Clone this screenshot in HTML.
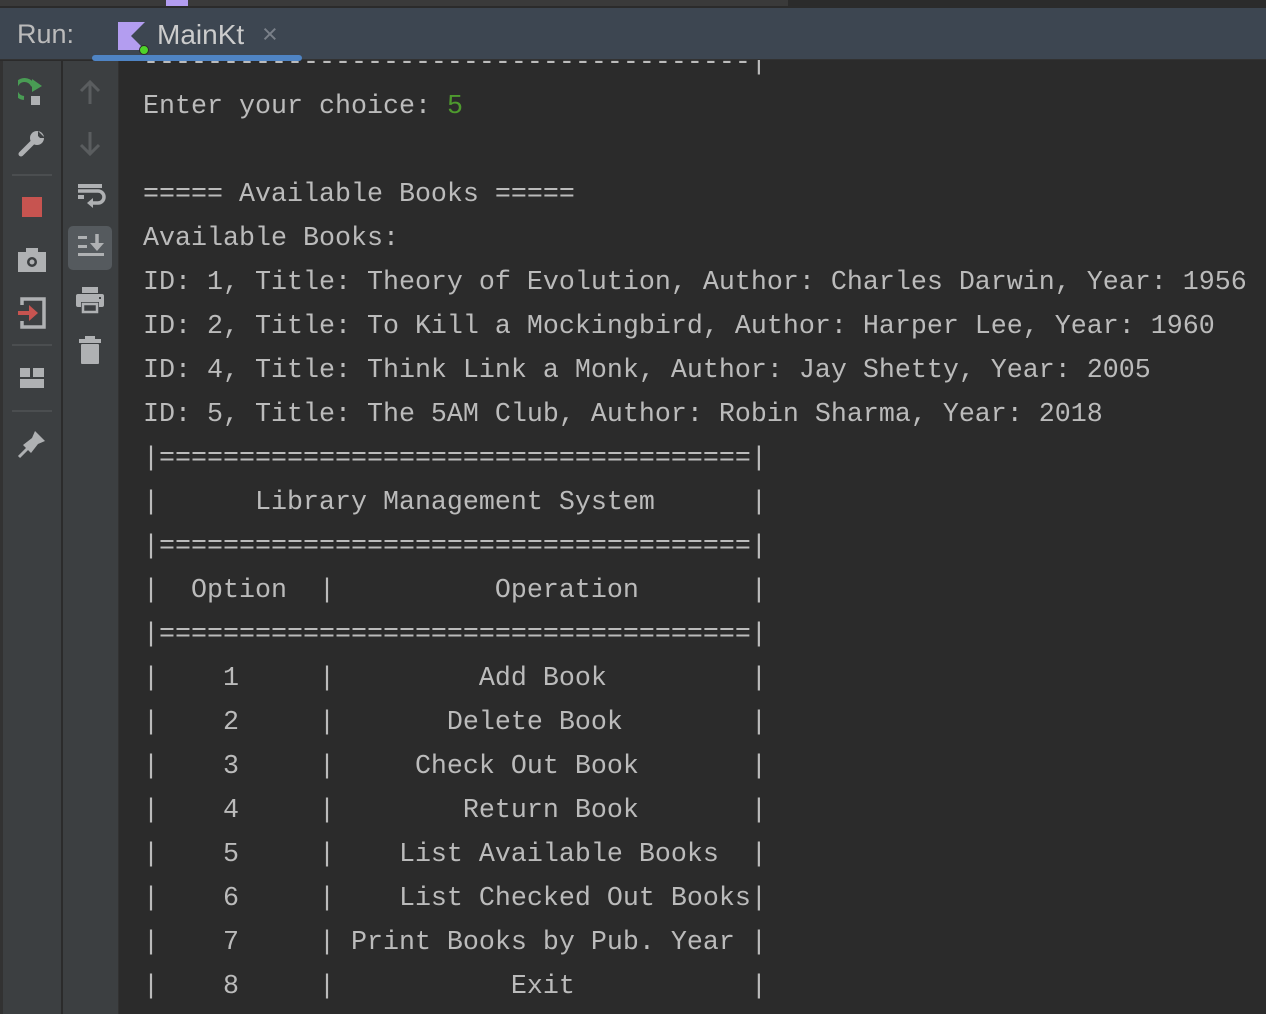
<!DOCTYPE html>
<html><head><meta charset="utf-8"><style>
*{margin:0;padding:0;box-sizing:border-box}
body{width:1266px;height:1014px;overflow:hidden;background:#2b2b2b;position:relative;font-family:"Liberation Sans",sans-serif}
#top{position:absolute;left:0;top:0;width:1266px;height:8px;background:#2b2b2b}
#hdr{position:absolute;left:0;top:8px;width:1266px;height:52px;background:#3d4651;border-bottom:1px solid #323232}
#tb1{position:absolute;left:0;top:61px;width:61px;height:953px;background:#3c3f41;border-left:3px solid #323232}
#tb2{position:absolute;left:62px;top:61px;width:57px;height:953px;background:#3c3f41;border-left:1px solid #2b2b2b;border-right:1px solid #323232}
#con{position:absolute;left:143px;top:41px;font-family:"Liberation Mono",monospace;font-size:26.67px;line-height:44px;color:#bbbbbb;white-space:pre}
.g{color:#4e9a2e}
svg{position:absolute}
.sep{position:absolute;left:12px;width:40px;height:2px;background:#4b4e50}
</style></head><body>
<div id="con">--------------------------------------|
Enter your choice: <span class="g">5</span>

===== Available Books =====
Available Books:
ID: 1, Title: Theory of Evolution, Author: Charles Darwin, Year: 1956
ID: 2, Title: To Kill a Mockingbird, Author: Harper Lee, Year: 1960
ID: 4, Title: Think Link a Monk, Author: Jay Shetty, Year: 2005
ID: 5, Title: The 5AM Club, Author: Robin Sharma, Year: 2018
|=====================================|
|      Library Management System      |
|=====================================|
|  Option  |          Operation       |
|=====================================|
|    1     |         Add Book         |
|    2     |       Delete Book        |
|    3     |     Check Out Book       |
|    4     |        Return Book       |
|    5     |    List Available Books  |
|    6     |    List Checked Out Books|
|    7     | Print Books by Pub. Year |
|    8     |           Exit           |</div>
<div id="top"><div style="position:absolute;left:0;top:0;width:788px;height:6px;background:#3a3a3a"></div><div style="position:absolute;left:166px;top:0;width:22px;height:6px;background:#b39df0"></div></div>
<div id="hdr">
<div style="position:absolute;left:17px;top:11px;font-size:27px;color:#bbbbbb">Run:</div>
<svg style="left:118px;top:14px" width="32" height="34" viewBox="0 0 32 34"><polygon points="0,0 27,0 13,14 27,28 0,28" fill="#b39df0"/><circle cx="26" cy="28" r="4.5" fill="#4ed32a" stroke="#2b2b2b" stroke-width="1"/></svg>
<div style="position:absolute;left:157px;top:11px;font-size:28px;color:#cccccc">MainKt</div>
<div style="position:absolute;left:262px;top:11px;font-size:27px;color:#7a8089">×</div>
<div style="position:absolute;left:92px;top:47px;width:210px;height:6px;border-radius:3px;background:#4f84c4"></div>
</div>
<div id="tb1"></div>
<div id="tb2"></div>
<svg style="left:18px;top:76px" width="30" height="32" viewBox="0 0 30 32"><path d="M15 10 A9 9 0 1 0 6 22" fill="none" stroke="#499c54" stroke-width="4"/><polygon points="14,3 24,10 14,16" fill="#499c54"/><rect x="13" y="20" width="9" height="9" fill="#afb1b3"/></svg>
<svg style="left:18px;top:128px" width="30" height="30" viewBox="0 0 30 30"><path d="M3 26 L15 14" stroke="#afb1b3" stroke-width="5" stroke-linecap="round"/><circle cx="19" cy="10" r="7" fill="#afb1b3"/><path d="M20 3 L27 10 L22 10 L20 8Z" fill="#3c3f41"/></svg>
<div class="sep" style="top:174px"></div>
<div style="position:absolute;left:22px;top:197px;width:20px;height:20px;background:#c75450"></div>
<svg style="left:17px;top:247px" width="30" height="26" viewBox="0 0 30 26"><rect x="1" y="5" width="28" height="20" fill="#afb1b3"/><rect x="9" y="1" width="12" height="6" fill="#afb1b3"/><circle cx="15" cy="15" r="5" fill="#3c3f41"/><circle cx="15" cy="15" r="2.5" fill="#afb1b3"/></svg>
<svg style="left:17px;top:297px" width="30" height="32" viewBox="0 0 30 32"><path d="M5 8 V2 H27 V30 H5 V24" fill="none" stroke="#afb1b3" stroke-width="3.5"/><path d="M1 16 H15" stroke="#c75450" stroke-width="4"/><polygon points="12,8 21,16 12,24" fill="#c75450"/></svg>
<div class="sep" style="top:344px"></div>
<svg style="left:19px;top:367px" width="26" height="22" viewBox="0 0 26 22"><rect x="1" y="1" width="10" height="9" fill="#afb1b3"/><rect x="14" y="1" width="11" height="9" fill="#afb1b3"/><rect x="1" y="12" width="24" height="9" fill="#afb1b3"/></svg>
<div class="sep" style="top:410px"></div>
<svg style="left:17px;top:428px" width="30" height="32" viewBox="0 0 30 32"><path d="M2 29 L12 19" stroke="#afb1b3" stroke-width="3"/><polygon points="18,3 28,13 21,16 14,25 6,17 15,10" fill="#afb1b3"/></svg>
<svg style="left:79px;top:79px" width="22" height="26" viewBox="0 0 22 26"><path d="M11 25 V4 M2 12 L11 3 L20 12" fill="none" stroke="#5a5d5f" stroke-width="3"/></svg>
<svg style="left:79px;top:131px" width="22" height="26" viewBox="0 0 22 26"><path d="M11 1 V22 M2 14 L11 23 L20 14" fill="none" stroke="#5a5d5f" stroke-width="3"/></svg>
<svg style="left:76px;top:182px" width="30" height="30" viewBox="0 0 30 30"><rect x="2" y="2" width="24" height="4" fill="#afb1b3"/><rect x="2" y="13" width="6" height="4" fill="#afb1b3"/><path d="M2 9 H22 A5 5 0 0 1 22 21 H15" fill="none" stroke="#afb1b3" stroke-width="3.5"/><polygon points="17,16 11,21 17,26" fill="#afb1b3"/></svg>
<div style="position:absolute;left:68px;top:226px;width:44px;height:44px;border-radius:5px;background:#555a5e"></div>
<svg style="left:76px;top:232px" width="30" height="32" viewBox="0 0 30 32"><rect x="2" y="4" width="9" height="3" fill="#afb1b3"/><rect x="2" y="13" width="9" height="3" fill="#afb1b3"/><rect x="2" y="21" width="26" height="3" fill="#afb1b3"/><path d="M21 2 V13" stroke="#afb1b3" stroke-width="3.5"/><polygon points="14,11 28,11 21,19" fill="#afb1b3"/></svg>
<svg style="left:75px;top:286px" width="30" height="30" viewBox="0 0 30 30"><rect x="7" y="1" width="16" height="6" fill="#afb1b3"/><rect x="1" y="8" width="28" height="13" rx="2" fill="#afb1b3"/><rect x="6" y="16" width="18" height="12" fill="#3c3f41"/><rect x="8" y="18" width="14" height="8" fill="#3c3f41" stroke="#afb1b3" stroke-width="2.5"/><rect x="24" y="11" width="2" height="2" fill="#3c3f41"/></svg>
<svg style="left:78px;top:336px" width="24" height="30" viewBox="0 0 24 30"><rect x="7" y="0" width="10" height="4" fill="#afb1b3"/><rect x="1" y="3" width="22" height="4" fill="#afb1b3"/><rect x="3" y="8" width="18" height="20" rx="1" fill="#afb1b3"/></svg>
</body></html>
